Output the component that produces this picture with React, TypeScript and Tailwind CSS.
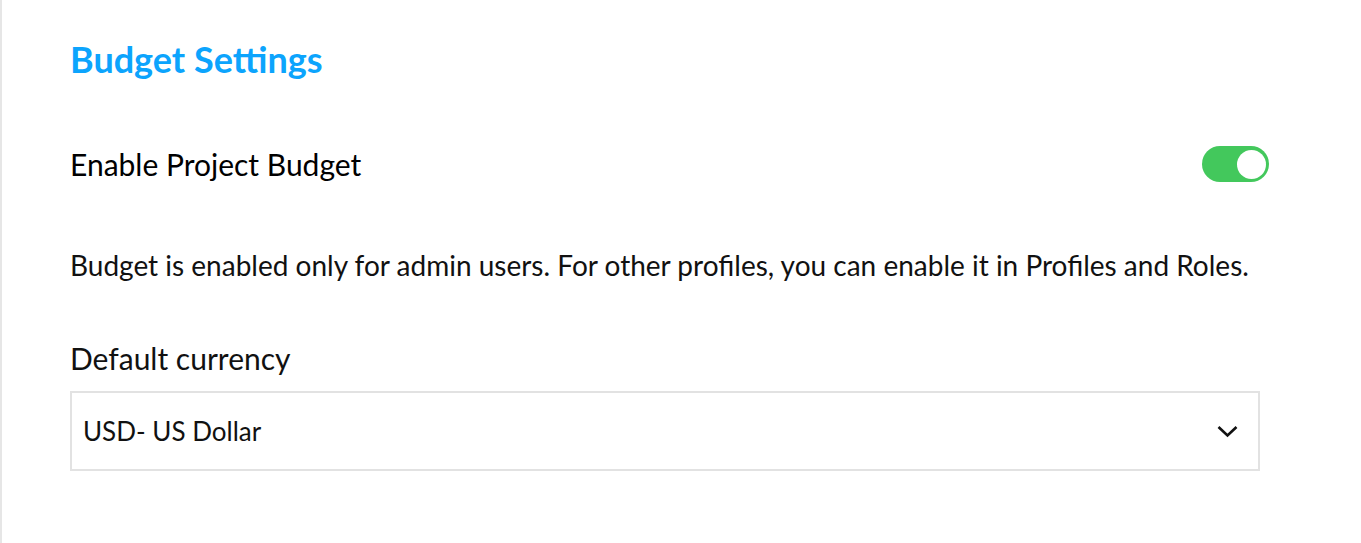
import React from "react";

const Toggle = ({ on }: { on: boolean }) => (
  <div
    className={`flex h-[36px] w-[67px] items-center rounded-full px-[3px] ${
      on ? "justify-end bg-[#43c85c]" : "justify-start bg-[#d5d5d5]"
    }`}
  >
    <div className="h-[29px] w-[29px] rounded-full bg-white"></div>
  </div>
);

const App = () => (
  <div className="h-[543px] w-[1361px] overflow-hidden bg-white font-['Lato',sans-serif]">
    <div className="h-full border-l-2 border-[#e6e6e6] pl-[68px] pt-[38px]">
      <div className="w-[1199px]">
        <h1 className="text-[36px] font-bold leading-[42px] text-[#0ca4fd]">Budget Settings</h1>
        <div className="mt-[64px] flex items-center justify-between">
          <p className="text-[30px] leading-[40px] text-black">Enable Project Budget</p>
          <Toggle on={true} />
        </div>
        <p className="mt-[63px] text-[28px] leading-[36px] text-[#111]">
          Budget is enabled only for admin users. For other profiles, you can enable it in Profiles and Roles.
        </p>
        <p className="mt-[55px] text-[30px] leading-[40px] text-[#111]">Default currency</p>
        <div className="mt-[13px] flex h-[80px] w-[1190px] items-center justify-between border-2 border-[#e2e2e2] pl-[11px] pr-[20px]">
          <span className="text-[26px] text-[#111]">USD- US Dollar</span>
          <svg width="21" height="13" viewBox="0 0 21 13" fill="none">
            <path d="M1.5 2l9 8.5 9-8.5" stroke="#111" strokeWidth="2.6" />
          </svg>
        </div>
      </div>
    </div>
  </div>
);

export default App;
